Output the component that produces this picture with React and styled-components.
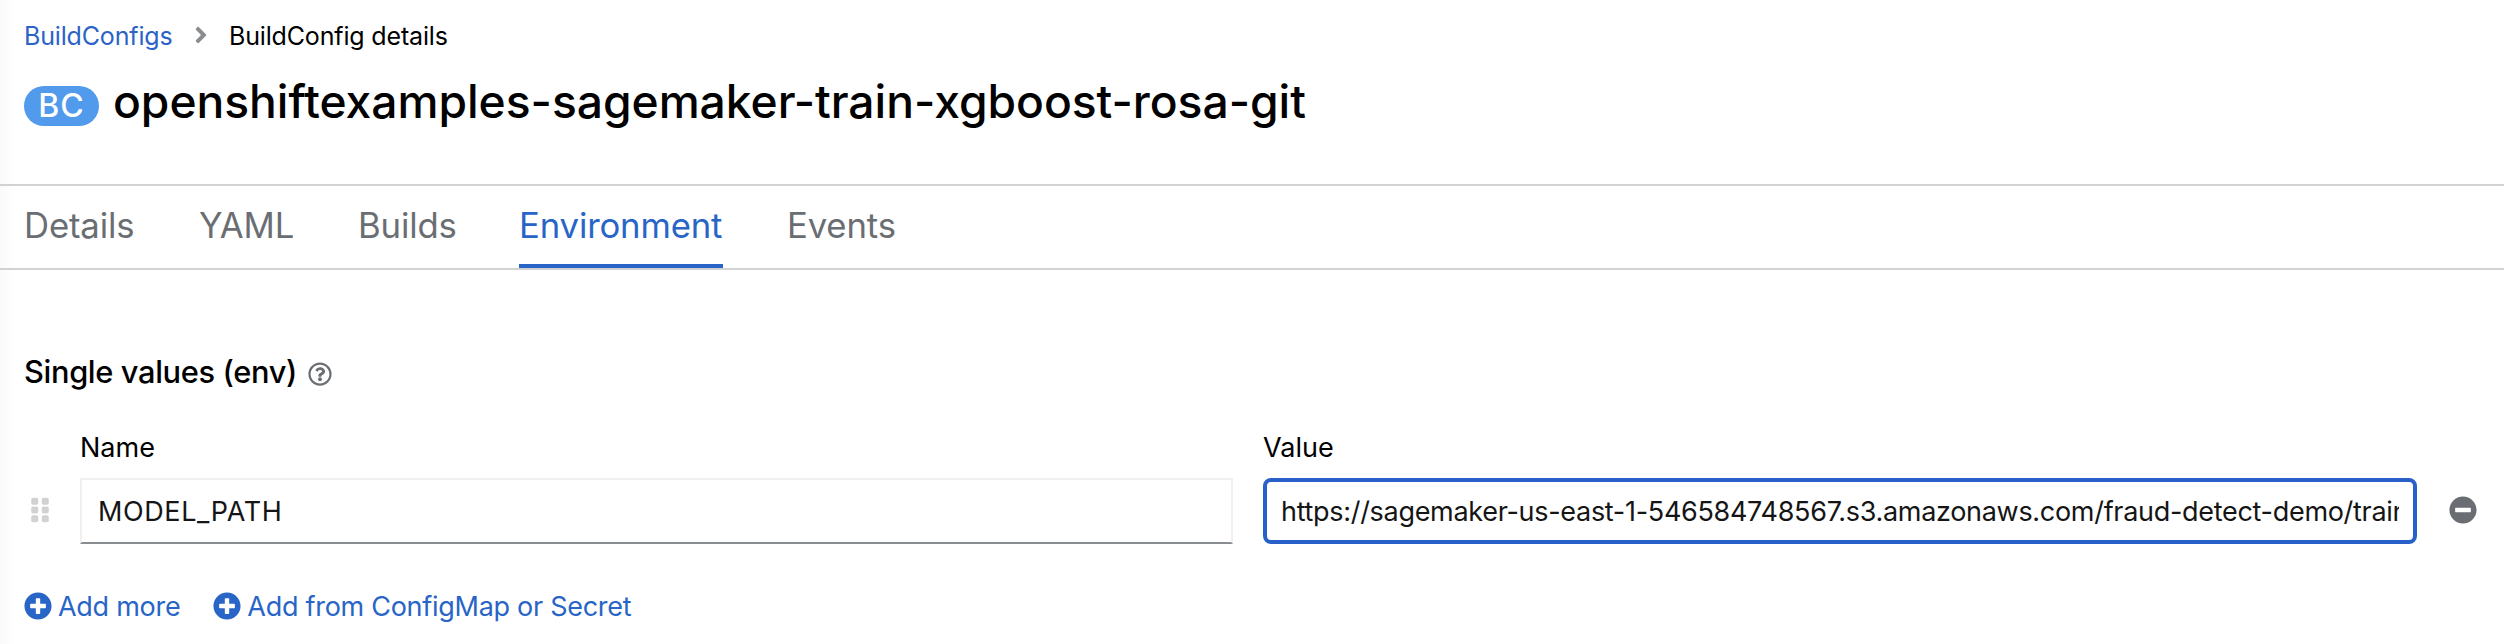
import React from 'react';
import styled, { createGlobalStyle } from 'styled-components';
import {
  FaAngleRight,
  FaGripVertical,
  FaMinusCircle,
  FaPlusCircle,
  FaRegQuestionCircle,
} from 'react-icons/fa';

const GlobalStyle = createGlobalStyle`
  *, *::before, *::after { box-sizing: border-box; }
  body { margin: 0; background: #fff; }
  svg { display: block; flex: none; }
`;

const Page = styled.div`
  min-height: 644px;
  overflow: hidden;
  color: #000;
  font-family: Inter, "Liberation Sans", sans-serif;
  font-size: 27px;
  white-space: nowrap;
  background: linear-gradient(to right, #fafafa 0, #fff 14px) #fff;
`;

const Header = styled.header`
  height: 184px;
  padding: 18px 24px 0;
`;

const Breadcrumb = styled.nav`
  display: flex;
  align-items: center;
  height: 36px;
  font-size: 25px;
  letter-spacing: -0.16px;
`;

const Crumb = styled.span`
  line-height: 36px;
  color: ${(p) => (p.$link ? '#2b63c7' : '#000')};
  ${(p) => p.$link && 'width: 150px;'}
`;

const Chevron = styled(FaAngleRight)`
  width: 26px;
  height: 26px;
  margin: 0 15px 0 14px;
  color: #8a8d90;
  transform: translateY(-1px);
`;

const TitleRow = styled.div`
  display: flex;
  align-items: flex-start;
  margin-top: 17px;
`;

const Badge = styled.span`
  width: 75px;
  height: 40px;
  margin: 15px 14px 0 0;
  border-radius: 20px;
  background: #519aec;
  color: #fff;
  font-size: 32px;
  font-weight: 500;
  letter-spacing: 1px;
  line-height: 40px;
  text-align: center;
`;

const Title = styled.h1`
  margin: 0;
  font-size: 46.2px;
  font-weight: 500;
  line-height: 60px;
  letter-spacing: -0.03px;
`;

const Tabs = styled.nav`
  display: flex;
  gap: 64px;
  height: 86px;
  padding: 0 24px;
  border-top: 2px solid #d2d2d2;
  border-bottom: 2px solid #d2d2d2;
`;

const Tab = styled.a`
  width: ${(p) => p.$width}px;
  border-bottom: 4px solid ${(p) => (p.$active ? '#2865c6' : 'transparent')};
  color: ${(p) => (p.$active ? '#2865c6' : '#6a6e73')};
  font-size: 34.7px;
  line-height: 78px;
  letter-spacing: -0.15px;
`;

const Section = styled.section`
  padding: 81px 0 0 24px;
`;

const SectionTitle = styled.h2`
  display: flex;
  align-items: center;
  gap: 11px;
  height: 40px;
  margin: 0;
  font-size: 30.8px;
  font-weight: 500;
  letter-spacing: -0.35px;
`;

const HelpIcon = styled(FaRegQuestionCircle)`
  width: 24px;
  height: 24px;
  margin-top: 5px;
  color: #6a6e73;
`;

const PairGrid = styled.div`
  display: grid;
  grid-template-columns: 26px 1153fr 1154fr 57px;
  grid-template-rows: 40px 66px;
  column-gap: 30px;
  row-gap: 10px;
  align-items: center;
  margin-top: 37px;
`;

const Label = styled.label`
  grid-column: ${(p) => p.$column};
  line-height: 40px;
`;

const Grip = styled(FaGripVertical)`
  grid-column: 1;
  width: 28px;
  height: 28px;
  margin: -2px 0 0 2px;
  color: #d2d2d2;
`;

const Input = styled.input`
  width: 100%;
  min-width: 0;
  height: 66px;
  margin: 0;
  padding: 0 16px;
  border: 2px solid #f0f0f0;
  border-bottom-color: #8a8d90;
  border-radius: 0;
  outline: none;
  background: #fff;
  color: #151515;
  font: inherit;
  letter-spacing: 0.6px;
`;

const FocusedInput = styled(Input)`
  padding: 0 14px;
  border: 4px solid #285fc9;
  border-radius: 8px;
  letter-spacing: -0.3px;
`;

const RemoveIcon = styled(FaMinusCircle)`
  width: 28px;
  height: 28px;
  margin: -2px 0 0 2px;
  color: #6a6e73;
`;

const Actions = styled.div`
  display: flex;
  gap: 33px;
  margin-top: 42px;
`;

const AddButton = styled.button`
  display: flex;
  align-items: center;
  gap: 6px;
  height: 42px;
  padding: 0;
  border: 0;
  background: none;
  color: #2865c6;
  font: inherit;
  line-height: 42px;
  letter-spacing: -0.28px;

  svg {
    width: 28px;
    height: 28px;
    margin-top: -2px;
  }
`;

const tabs = [
  { label: 'Details', width: 111 },
  { label: 'YAML', width: 95 },
  { label: 'Builds', width: 97 },
  { label: 'Environment', width: 204, active: true },
  { label: 'Events', width: 110 },
];

export default function App() {
  return (
    <Page>
      <GlobalStyle />
      <Header>
        <Breadcrumb>
          <Crumb $link>BuildConfigs</Crumb>
          <Chevron />
          <Crumb>BuildConfig details</Crumb>
        </Breadcrumb>
        <TitleRow>
          <Badge>BC</Badge>
          <Title>openshiftexamples-sagemaker-train-xgboost-rosa-git</Title>
        </TitleRow>
      </Header>
      <Tabs>
        {tabs.map((t) => (
          <Tab key={t.label} $width={t.width} $active={t.active}>
            {t.label}
          </Tab>
        ))}
      </Tabs>
      <Section>
        <SectionTitle>
          Single values (env)
          <HelpIcon />
        </SectionTitle>
        <PairGrid>
          <Label $column={2} htmlFor="env-name">Name</Label>
          <Label $column={3} htmlFor="env-value">Value</Label>
          <Grip />
          <Input id="env-name" defaultValue="MODEL_PATH" />
          <FocusedInput
            id="env-value"
            defaultValue="https://sagemaker-us-east-1-546584748567.s3.amazonaws.com/fraud-detect-demo/train"
          />
          <RemoveIcon />
        </PairGrid>
        <Actions>
          <AddButton>
            <FaPlusCircle />
            Add more
          </AddButton>
          <AddButton>
            <FaPlusCircle />
            Add from ConfigMap or Secret
          </AddButton>
        </Actions>
      </Section>
    </Page>
  );
}
